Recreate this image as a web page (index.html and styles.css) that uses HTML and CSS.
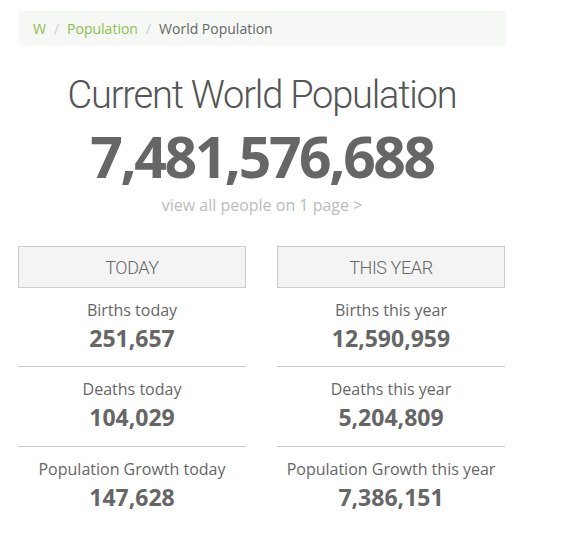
FILE: index.html
```html
<!DOCTYPE html>
<html>
<head>
<meta charset="utf-8">
<link rel="stylesheet" href="styles.css">
</head>
<body>
<div class="page">
  <nav class="crumbs">
    <a class="crumb-link">W</a><span class="sep">/</span><a class="crumb-link">Population</a><span class="sep">/</span><span class="crumb-current">World Population</span>
  </nav>
  <h1 class="title">Current World Population</h1>
  <div class="big-number">7,481,576,688</div>
  <div class="view-all">view all people on 1 page &gt;</div>
  <div class="cols">
    <div class="col">
      <div class="col-head">TODAY</div>
      <div class="stat"><div class="stat-label">Births today</div><div class="stat-value">251,657</div></div>
      <div class="stat"><div class="stat-label">Deaths today</div><div class="stat-value">104,029</div></div>
      <div class="stat"><div class="stat-label">Population Growth today</div><div class="stat-value">147,628</div></div>
    </div>
    <div class="col">
      <div class="col-head">THIS YEAR</div>
      <div class="stat"><div class="stat-label">Births this year</div><div class="stat-value">12,590,959</div></div>
      <div class="stat"><div class="stat-label">Deaths this year</div><div class="stat-value">5,204,809</div></div>
      <div class="stat"><div class="stat-label">Population Growth this year</div><div class="stat-value">7,386,151</div></div>
    </div>
  </div>
</div>
</body>
</html>
```
FILE: styles.css
```css
html, body { margin: 0; padding: 0; background: #fff; }
body { font-family: "Open Sans", "Liberation Sans", sans-serif; color: #666; }
.page { width: 488px; margin-left: 18px; padding-top: 11px; }
.crumbs {
  height: 35px; box-sizing: border-box; background: #f6f8f5; border-radius: 4px;
  padding: 0 15px; display: flex; align-items: center; font-size: 14px;
}
.crumb-link { color: #8cbf4f; }
.sep { color: #ccc; padding: 0 8px; }
.crumb-current { color: #666; }
.title {
  margin: 27px 0 0; text-align: center; font-family: Roboto, sans-serif; font-weight: 300;
  font-size: 38px; line-height: 44px; color: #555; letter-spacing: -1.2px;
}
.big-number {
  margin-top: 8px; text-align: center; font-weight: 700; font-size: 57px; line-height: 62px; color: #666;
  letter-spacing: -2.4px;
}
.view-all { text-align: center; color: #bbb; font-size: 16px; line-height: 22px; margin-top: 7px; }
.cols { display: grid; grid-template-columns: 228px 228px; column-gap: 31px; margin-top: 30px; }
.col-head {
  height: 42px; box-sizing: border-box; border: 1px solid #ccc; background: #f4f4f4;
  display: flex; align-items: center; justify-content: center;
  font-family: Roboto, sans-serif; font-weight: 300; font-size: 18px; color: #666; letter-spacing: -0.4px;
}
.stat { height: 80px; box-sizing: border-box; border-bottom: 1px solid #ccc; text-align: center; padding-top: 10px; }
.col-head + .stat { height: 79px; }
.stat:last-child { border-bottom: none; }
.stat-label { font-size: 16px; line-height: 24px; color: #666; }
.stat-value { font-size: 23px; line-height: 32px; font-weight: 700; color: #666; }
```
